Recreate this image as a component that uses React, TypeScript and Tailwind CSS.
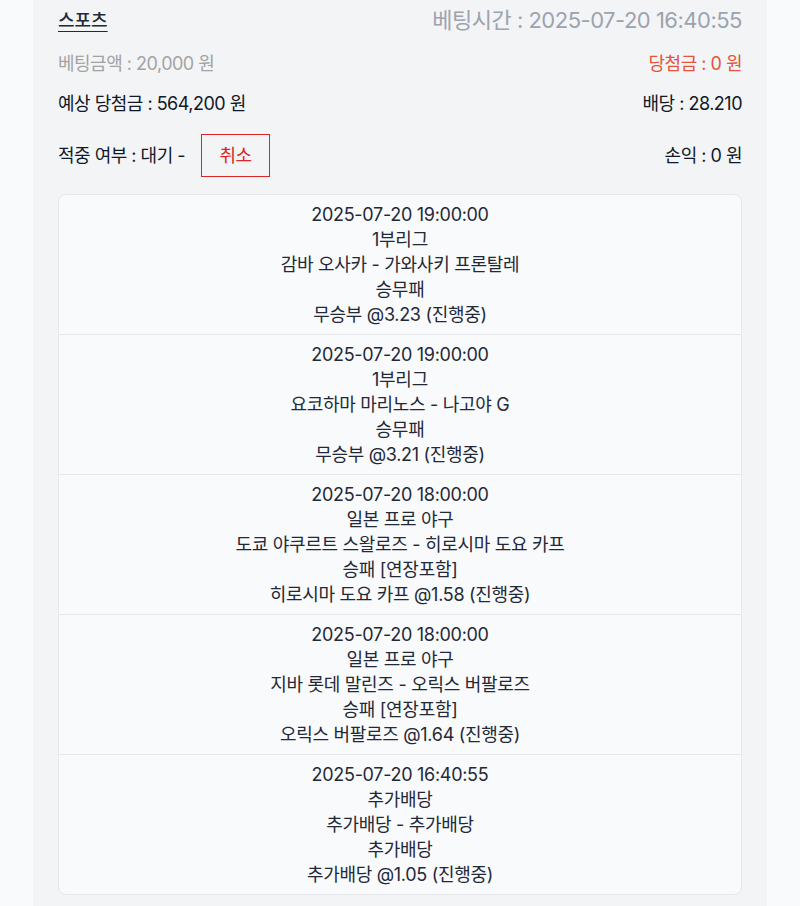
import React from 'react';

const items = [
  {
    time: '2025-07-20 19:00:00',
    league: '1부리그',
    match: '감바 오사카 - 가와사키 프론탈레',
    market: '승무패',
    pick: '무승부 @3.23 (진행중)',
  },
  {
    time: '2025-07-20 19:00:00',
    league: '1부리그',
    match: '요코하마 마리노스 - 나고야 G',
    market: '승무패',
    pick: '무승부 @3.21 (진행중)',
  },
  {
    time: '2025-07-20 18:00:00',
    league: '일본 프로 야구',
    match: '도쿄 야쿠르트 스왈로즈 - 히로시마 도요 카프',
    market: '승패 [연장포함]',
    pick: '히로시마 도요 카프 @1.58 (진행중)',
  },
  {
    time: '2025-07-20 18:00:00',
    league: '일본 프로 야구',
    match: '지바 롯데 말린즈 - 오릭스 버팔로즈',
    market: '승패 [연장포함]',
    pick: '오릭스 버팔로즈 @1.64 (진행중)',
  },
  {
    time: '2025-07-20 16:40:55',
    league: '추가배당',
    match: '추가배당 - 추가배당',
    market: '추가배당',
    pick: '추가배당 @1.05 (진행중)',
  },
];

export default function App() {
  return (
    <div
      className="min-h-screen bg-[#f9fafb] px-[33px]"
      style={{ fontFamily: 'Inter, "Noto Sans CJK KR", sans-serif' }}
    >
      <div className="bg-[#f3f4f6] px-[25px] pb-[13px] min-h-[906px]">
        {/* Header */}
        <div className="flex h-[40px] items-center justify-between">
          <span className="text-[18px] font-medium text-[#1f2937] underline underline-offset-4">스포츠</span>
          <span className="text-[22px] text-[#9ca3af] tracking-[-0.5px]">베팅시간 : 2025-07-20 16:40:55</span>
        </div>

        {/* Summary */}
        <div className="mt-[3px] flex h-[40px] items-center justify-between text-[18px] tracking-[-0.5px]">
          <span className="text-[#a3a3a3]">베팅금액 : 20,000 원</span>
          <span className="text-[#e5533b]">당첨금 : 0 원</span>
        </div>
        <div className="flex h-[40px] items-center justify-between text-[18px] tracking-[-0.5px] text-[#111827]">
          <span>예상 당첨금 : 564,200 원</span>
          <span>배당 : 28.210</span>
        </div>
        <div className="mt-[10px] flex h-[44px] items-center justify-between text-[18px] tracking-[-0.5px] text-[#111827]">
          <div className="flex items-center gap-[16px]">
            <span>적중 여부 : 대기 -</span>
            <button className="flex h-[43px] w-[69px] items-center justify-center border-[1.5px] border-[#dc2626] bg-transparent text-[#dc2626]">
              취소
            </button>
          </div>
          <span>손익 : 0 원</span>
        </div>

        {/* Detail list */}
        <div className="mt-[17px] divide-y divide-[#e5e7eb] rounded-[8px] border border-[#e5e7eb] bg-[#f9fafb]">
          {items.map((it, i) => (
            <div key={i} className="py-[7px] text-center text-[18px] leading-[25px] tracking-[-0.3px] text-[#1f2937]">
              <p>{it.time}</p>
              <p>{it.league}</p>
              <p>{it.match}</p>
              <p>{it.market}</p>
              <p>{it.pick}</p>
            </div>
          ))}
        </div>
      </div>
    </div>
  );
}
